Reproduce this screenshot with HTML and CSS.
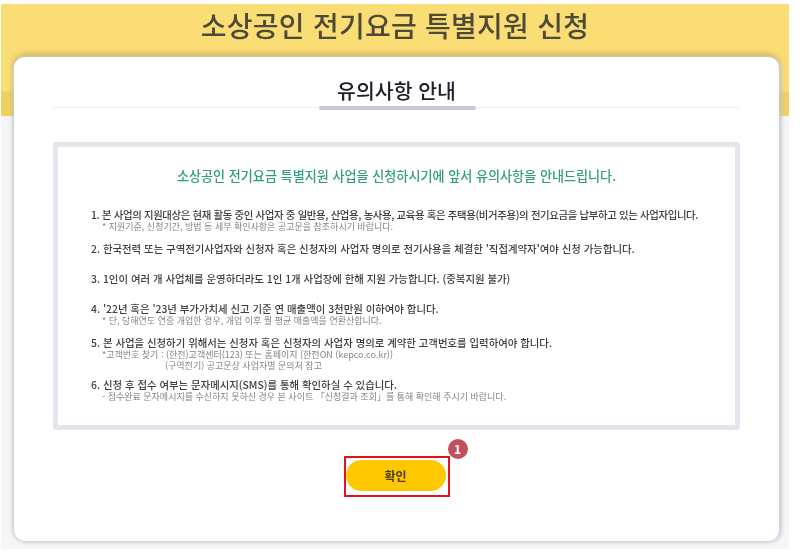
FILE: index.html
```html
<!DOCTYPE html>
<html lang="ko">
<head>
<meta charset="utf-8">
<title>소상공인 전기요금 특별지원 신청</title>
<link rel="stylesheet" href="styles.css">
</head>
<body>
<div class="frame">
  <header class="band">
    <h1 class="page-title">소상공인 전기요금 특별지원 신청</h1>
  </header>
  <main class="card">
    <div class="section-head">
      <h2 class="section-title">유의사항 안내</h2>
    </div>
    <section class="notice">
      <p class="lead">소상공인 전기요금 특별지원 사업을 신청하시기에 앞서 유의사항을 안내드립니다.</p>
      <div class="item item-1">
        <p class="main">1. 본 사업의 지원대상은 현재 활동 중인 사업자 중 일반용, 산업용, 농사용, 교육용 혹은 주택용(비거주용)의 전기요금을 납부하고 있는 사업자입니다.</p>
        <p class="sub">* 지원기준, 신청기간, 방법 등 세부 확인사항은 공고문을 참조하시기 바랍니다.</p>
      </div>
      <div class="item item-2">
        <p class="main">2. 한국전력 또는 구역전기사업자와 신청자 혹은 신청자의 사업자 명의로 전기사용을 체결한 '직접계약자'여야 신청 가능합니다.</p>
      </div>
      <div class="item item-3">
        <p class="main">3. 1인이 여러 개 사업체를 운영하더라도 1인 1개 사업장에 한해 지원 가능합니다. (중복지원 불가)</p>
      </div>
      <div class="item item-4">
        <p class="main">4. '22년 혹은 '23년 부가가치세 신고 기준 연 매출액이 3천만원 이하여야 합니다.</p>
        <p class="sub">* 단, 당해연도 연중 개업한 경우, 개업 이후 월 평균 매출액을 연환산합니다.</p>
      </div>
      <div class="item item-5">
        <p class="main">5. 본 사업을 신청하기 위해서는 신청자 혹은 신청자의 사업자 명의로 계약한 고객번호를 입력하여야 합니다.</p>
        <p class="sub">*고객번호 찾기 : (한전)고객센터(123) 또는 홈페이지 (한전ON (kepco.co.kr))</p>
        <p class="sub sub-indent">(구역전기) 공고문상 사업자별 문의처 참고</p>
      </div>
      <div class="item item-6">
        <p class="main">6. 신청 후 접수 여부는 문자메시지(SMS)를 통해 확인하실 수 있습니다.</p>
        <p class="sub">- 접수완료 문자메시지를 수신하지 못하신 경우 본 사이트 「신청결과 조회」를 통해 확인해 주시기 바랍니다.</p>
      </div>
    </section>
    <div class="actions">
      <div class="highlight">
        <button class="confirm" type="button">확인</button>
        <span class="step">1</span>
      </div>
    </div>
  </main>
</div>
</body>
</html>
```
FILE: styles.css
```css
* { box-sizing: border-box; }
html, body { margin: 0; padding: 0; background: #fff; }
body {
  width: 800px;
  height: 552px;
  overflow: hidden;
  font-family: "Noto Sans CJK KR", "Noto Sans", sans-serif;
}
p, h1, h2 { margin: 0; }
.frame {
  width: 788px;
  height: 545px;
  margin: 4px 0 0 1px;
  background: #f6f6f8;
  display: flex;
  flex-direction: column;
}
.band {
  height: 112px;
  flex: none;
  background: linear-gradient(#fbdd76 0, #fbdd76 87px, #efd163 88px, #efd163 112px);
}
.page-title {
  text-align: center;
  font-size: 28px;
  font-weight: 500;
  line-height: 42px;
  letter-spacing: 0.25px;
  color: #4d4a38;
  filter: blur(0.4px);
}
.card {
  width: 765px;
  height: 484px;
  margin: -59px 0 0 13px;
  background: #fff;
  border-radius: 11px;
  padding: 0 39px;
  box-shadow: -1px 0 3px #c9cbdb, 2px 1px 4px #c9cbdb, 0 -3px 6px rgba(120, 100, 40, .35);
}
.section-head {
  height: 51px;
  border-bottom: 1px solid #eff0f4;
  text-align: center;
  position: relative;
}
.section-head::after {
  content: "";
  position: absolute;
  left: 266px;
  bottom: -3px;
  width: 157px;
  height: 4px;
  border-radius: 2px;
  background: #c6c9da;
}
.section-title {
  font-size: 20.5px;
  font-weight: 500;
  line-height: 28px;
  padding-top: 19px;
  color: #20202a;
  filter: blur(0.3px);
}
.notice {
  margin-top: 34px;
  height: 288px;
  border: 5px solid #e4e6ee;
  border-radius: 3px;
  background: #fff;
  padding: 20px 0 0 33px;
  filter: blur(0.45px);
}
.lead {
  text-align: center;
  margin-left: -33px;
  font-size: 13.1px;
  font-weight: 500;
  line-height: 18px;
  color: #2f9c84;
}
.main {
  font-size: 10.4px;
  font-weight: 500;
  line-height: 12px;
  color: #3d3d3d;
  white-space: nowrap;
}
.item-1 .main { letter-spacing: -0.34px; }
.sub {
  font-size: 9px;
  line-height: 11px;
  color: #858585;
  padding-left: 11px;
  white-space: nowrap;
}
.sub-indent { padding-left: 74px; }
.item-1 { margin-top: 24px; }
.item-2 { margin-top: 11px; }
.item-3 { margin-top: 18px; }
.item-4 { margin-top: 18px; }
.item-5 { margin-top: 11px; }
.item-6 { margin-top: 8px; }
.actions {
  display: flex;
  justify-content: center;
  margin-top: 26px;
}
.highlight {
  position: relative;
  width: 106px;
  height: 41px;
  border: 2px solid #e3101e;
  padding: 2px 2px 2px 0;
}
.confirm {
  display: block;
  width: 100%;
  height: 31px;
  border: 0;
  border-radius: 16px;
  background: #fdc800;
  font-family: inherit;
  font-size: 12px;
  font-weight: 700;
  color: #4a3c10;
  padding: 0;
  filter: blur(0.25px);
}
.step {
  position: absolute;
  right: -20px;
  top: -19px;
  width: 20px;
  height: 20px;
  border-radius: 50%;
  background: #c2505a;
  color: #fff;
  font-size: 12px;
  font-weight: 700;
  line-height: 20px;
  text-align: center;
}
```
